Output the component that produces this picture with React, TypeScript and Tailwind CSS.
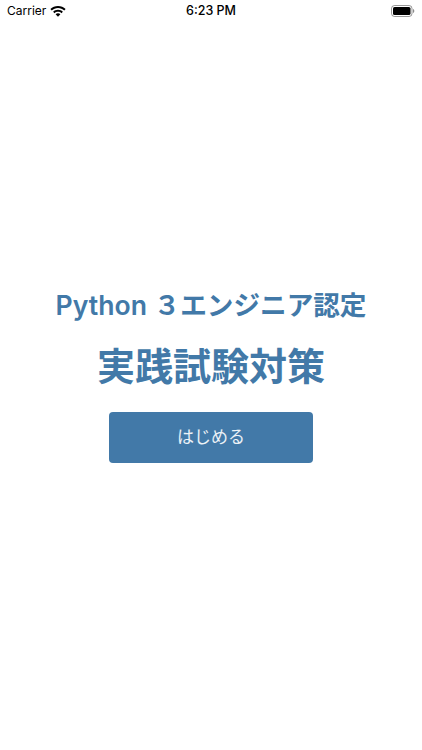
const cjk = "font-['Inter','Noto_Sans_CJK_JP',sans-serif]";

function Wifi() {
  return (
    <svg width="16" height="11" viewBox="0 0 17 12" fill="#000">
      <path d="M8.500 0C5.300 0 2.400 1.200.2 3.300l1.500 1.600C3.500 3.200 5.900 2.200 8.500 2.200s5 1 6.800 2.700l1.500-1.600C14.600 1.200 11.700 0 8.500 0z" />
      <path d="M8.500 4.100c-2 0-3.900.8-5.300 2.100l1.500 1.600c1-1 2.400-1.500 3.800-1.500s2.800.5 3.800 1.500l1.500-1.600C12.400 4.900 10.500 4.100 8.500 4.100z" />
      <path d="M8.500 8c-1 0-1.900.4-2.600 1l2.600 2.800L11.100 9c-.7-.6-1.600-1-2.600-1z" />
    </svg>
  );
}

function Battery() {
  return (
    <svg width="24" height="12" viewBox="0 0 24 12">
      <rect x="0.500" y="0.500" width="20.500" height="11" rx="3" fill="none" stroke="#000" strokeOpacity="0.4" />
      <rect x="2" y="2" width="17.500" height="8" rx="1.600" fill="#000" />
      <path d="M22 4v4c.8-.3 1.300-1.100 1.300-2S22.800 4.300 22 4z" fill="#000" fillOpacity="0.45" />
    </svg>
  );
}

export default function App() {
  return (
    <div className={`w-[422px] h-[750px] bg-white flex flex-col ${cjk}`}>
      <div className="h-[22px] px-[7px] grid grid-cols-3 items-center text-black">
        <div className="flex items-center gap-[4px] text-[12px]">
          <span>Carrier</span>
          <Wifi />
        </div>
        <div className="text-center text-[12.5px] font-medium">6:23 PM</div>
        <div className="flex justify-end">
          <Battery />
        </div>
      </div>
      <div className="flex flex-col items-center pt-[265px]">
        <div className="text-[26.6px] leading-[36px] font-semibold text-[#4279a8] whitespace-nowrap">
          Python ３エンジニア認定
        </div>
        <div className="mt-[19px] text-[38px] leading-[48px] font-semibold text-[#4279a8] whitespace-nowrap">
          実践試験対策
        </div>
        <button className="mt-[22px] w-[204px] h-[51px] rounded-[4px] bg-[#4279a8] text-white/90 text-[17px] flex items-center justify-center">
          はじめる
        </button>
      </div>
    </div>
  );
}
